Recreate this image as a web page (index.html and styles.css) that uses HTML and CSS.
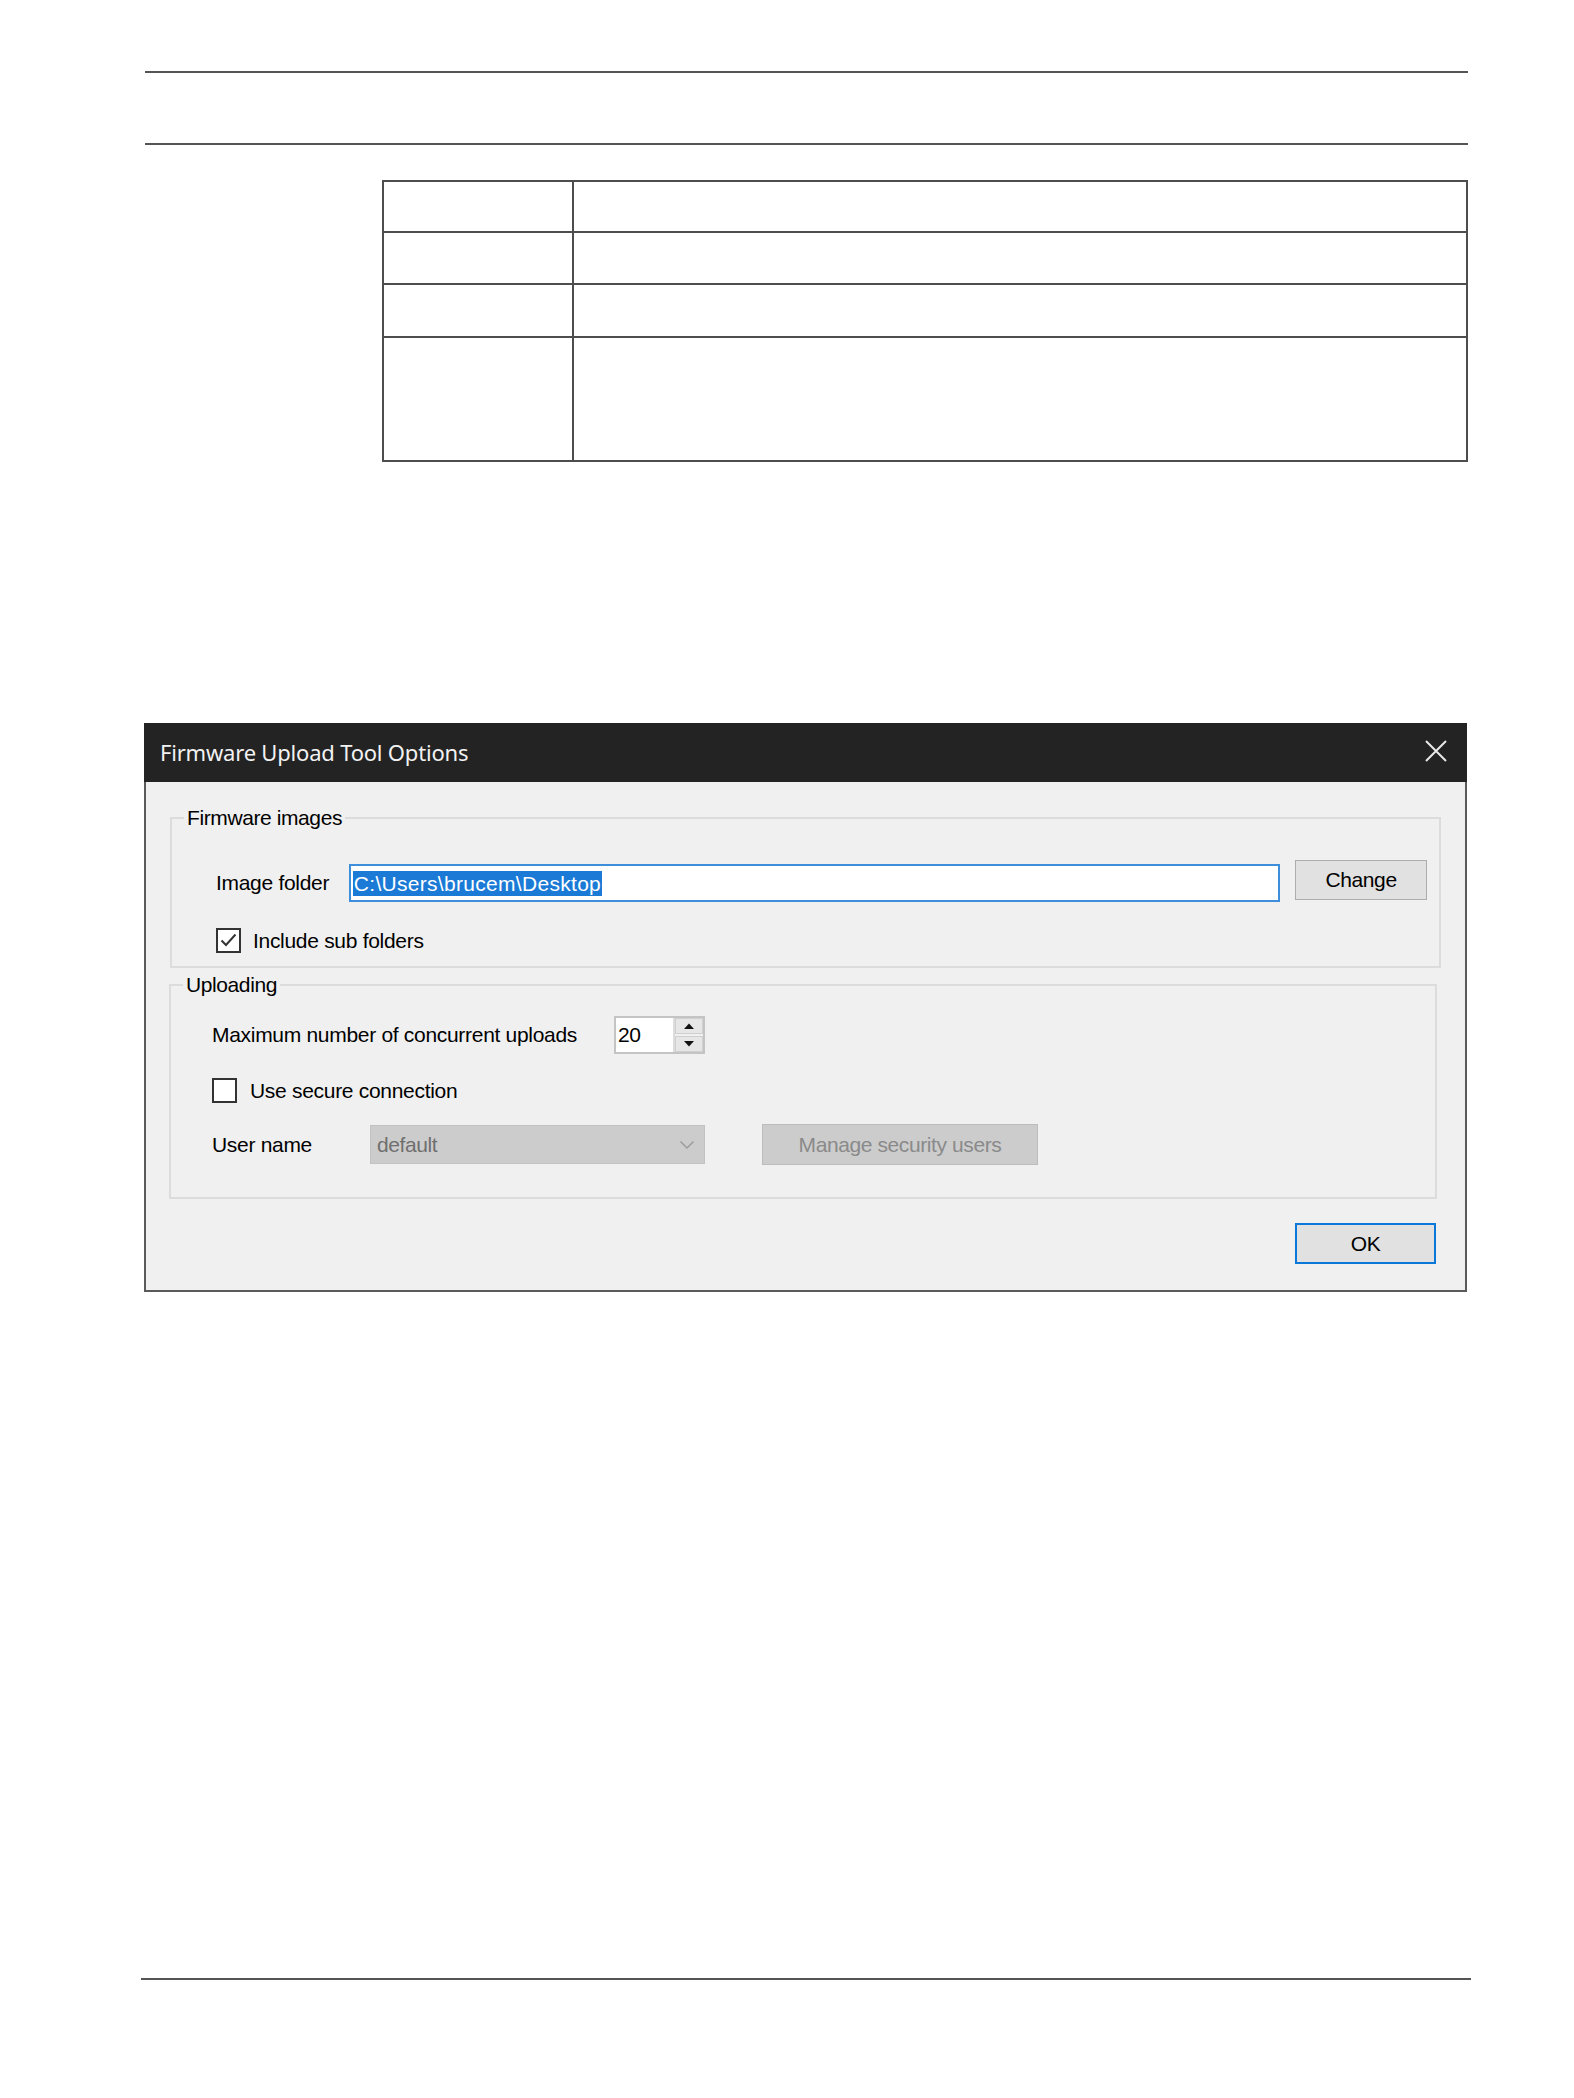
FILE: index.html
```html
<!DOCTYPE html>
<html lang="en">
<head>
<meta charset="utf-8">
<title>Firmware Upload Tool Options</title>
<link rel="stylesheet" href="styles.css">
</head>
<body>
<div class="page">
  <div class="rule"></div>
  <div class="rule rule-second"></div>

  <table class="grid-table">
    <tr class="r1"><td class="c1"></td><td class="c2"></td></tr>
    <tr class="r2"><td class="c1"></td><td class="c2"></td></tr>
    <tr class="r3"><td class="c1"></td><td class="c2"></td></tr>
    <tr class="r4"><td class="c1"></td><td class="c2"></td></tr>
  </table>

  <div class="dialog">
    <div class="titlebar">
      <span class="title">Firmware Upload Tool Options</span>
      <svg class="close" width="22" height="22" viewBox="0 0 22 22">
        <path d="M1 1 L21 21 M21 1 L1 21" stroke="#e8e8e8" stroke-width="2" fill="none"/>
      </svg>
    </div>
    <div class="body">
      <fieldset class="group group-images">
        <legend>Firmware images</legend>
        <div class="row row-folder">
          <span class="lbl lbl-folder">Image folder</span>
          <div class="textbox"><span class="sel">C:\Users\brucem\Desktop</span></div>
          <div class="btn btn-change">Change</div>
        </div>
        <div class="row row-check1">
          <span class="check checked">
            <svg width="21" height="21" viewBox="0 0 21 21"><path d="M3.5 10.5 L8 15 L17.5 4.5" stroke="#333" stroke-width="2" fill="none"/></svg>
          </span>
          <span class="lbl">Include sub folders</span>
        </div>
      </fieldset>

      <fieldset class="group group-upload">
        <legend>Uploading</legend>
        <div class="row row-max">
          <span class="lbl lbl-max">Maximum number of concurrent uploads</span>
          <div class="spin">
            <span class="spin-val">20</span>
            <div class="spin-btns">
              <div class="spin-btn"><svg width="12" height="8" viewBox="0 0 12 8"><path d="M1 7 L6 1.5 L11 7 Z" fill="#111"/></svg></div>
              <div class="spin-btn"><svg width="12" height="8" viewBox="0 0 12 8"><path d="M1 1 L6 6.5 L11 1 Z" fill="#111"/></svg></div>
            </div>
          </div>
        </div>
        <div class="row row-check2">
          <span class="check"></span>
          <span class="lbl">Use secure connection</span>
        </div>
        <div class="row row-user">
          <span class="lbl lbl-user">User name</span>
          <div class="combo">
            <span class="combo-val">default</span>
            <svg class="chev" width="16" height="10" viewBox="0 0 16 10"><path d="M1.5 1.5 L8 8 L14.5 1.5" stroke="#9c9c9c" stroke-width="1.5" fill="none"/></svg>
          </div>
          <div class="btn btn-manage">Manage security users</div>
        </div>
      </fieldset>

      <div class="footer">
        <div class="btn btn-ok">OK</div>
      </div>
    </div>
  </div>

  <div class="rule rule-bottom"></div>
</div>
</body>
</html>
```

FILE: styles.css
```css
html, body {
  margin: 0;
  padding: 0;
  background: #ffffff;
}

.page {
  padding-top: 71px;
  min-height: 2098px;
  box-sizing: border-box;
  font-family: "Liberation Sans", Arial, sans-serif;
}

.rule {
  margin-left: 145px;
  width: 1323px;
  height: 2px;
  background: #555555;
}

.rule-second {
  margin-top: 70px;
}

.rule-bottom {
  margin-top: 686px;
  margin-left: 141px;
  width: 1330px;
}

.grid-table {
  margin-top: 35px;
  margin-left: 382px;
  width: 1086px;
  border-collapse: collapse;
  border: 2px solid #4d4d4d;
}

.grid-table td {
  border: 2px solid #4d4d4d;
  padding: 0;
}

.grid-table .c1 { width: 188px; }
.grid-table .r1 td { height: 49px; }
.grid-table .r2 td { height: 50px; }
.grid-table .r3 td { height: 51px; }
.grid-table .r4 td { height: 122px; }

/* Dialog */
.dialog {
  margin-top: 261px;
  margin-left: 144px;
  width: 1323px;
  height: 569px;
  box-sizing: border-box;
  border: 2px solid #5a5a5a;
  border-top: none;
  background: #f0f0f0;
  display: flex;
  flex-direction: column;
}

.titlebar {
  height: 59px;
  margin: 0 -2px;
  background: #232323;
  display: flex;
  align-items: center;
  justify-content: space-between;
  padding: 0 20px 0 16px;
  flex-shrink: 0;
}

.title {
  font-family: "Noto Sans", "Open Sans", sans-serif;
  font-size: 22px;
  letter-spacing: -0.2px;
  color: #f2f2f2;
  position: relative;
  top: -1px;
}

.close {
  display: block;
  position: relative;
  top: -2px;
}

.body {
  flex: 1;
  padding: 24px 0 0 0;
  display: flex;
  flex-direction: column;
}

.group {
  margin: 0;
  border: 2px solid #dcdcdc;
  padding: 0 12px;
  min-width: 0;
}

.group legend {
  padding: 0 3px;
  font-size: 21px;
  line-height: 24px;
  letter-spacing: -0.4px;
  color: #000;
}

.group-images {
  margin-left: 24px;
  margin-right: 24px;
  padding-bottom: 13px;
}

.group-upload {
  margin-top: 5px;
  margin-left: 23px;
  margin-right: 28px;
  padding-bottom: 32px;
}

.row {
  display: flex;
  align-items: center;
}

.lbl {
  font-size: 21px;
  letter-spacing: -0.3px;
  color: #000;
  white-space: nowrap;
}

.row-folder {
  margin-top: 30px;
  margin-left: 32px;
  height: 42px;
}

.lbl-folder {
  width: 133px;
  position: relative;
  top: 2px;
}

.textbox {
  width: 933px;
  height: 38px;
  box-sizing: border-box;
  border: 2px solid #3d8fdc;
  background: #ffffff;
  display: flex;
  align-items: center;
  padding-left: 2px;
  margin-top: 4px;
}

.sel {
  background: #1a7ad6;
  color: #ffffff;
  font-size: 21px;
  letter-spacing: 0.3px;
  line-height: 25px;
  padding: 0 1px;
}

.btn {
  box-sizing: border-box;
  display: flex;
  align-items: center;
  justify-content: center;
  font-size: 21px;
  letter-spacing: -0.4px;
  background: #e1e1e1;
  border: 1px solid #adadad;
  color: #000;
}

.btn-change {
  margin-left: 15px;
  width: 132px;
  height: 40px;
  margin-bottom: 2px;
}

.check {
  width: 25px;
  height: 25px;
  box-sizing: border-box;
  border: 2px solid #333333;
  background: #ffffff;
  display: flex;
  align-items: center;
  justify-content: center;
  flex-shrink: 0;
}

.check svg { display: block; }

.row-check1 {
  margin-top: 26px;
  margin-left: 32px;
  height: 25px;
  gap: 12px;
}

.row-max {
  margin-top: 19px;
  margin-left: 29px;
  height: 38px;
}

.lbl-max {
  width: 402px;
}

.spin {
  width: 91px;
  height: 38px;
  box-sizing: border-box;
  border: 2px solid #c4c4c4;
  background: #ffffff;
  display: flex;
}

.spin-val {
  flex: 1;
  font-size: 21px;
  letter-spacing: -0.4px;
  line-height: 34px;
  padding-left: 2px;
}

.spin-btns {
  width: 28px;
  display: flex;
  flex-direction: column;
  gap: 2px;
  background: #f0f0f0;
  border-left: 2px solid #dcdcdc;
}

.spin-btn {
  flex: 1;
  background: #e6e6e6;
  border: 1px solid #cfcfcf;
  display: flex;
  align-items: center;
  justify-content: center;
}

.spin-btn svg { display: block; }

.row-check2 {
  margin-top: 24px;
  margin-left: 29px;
  height: 25px;
  gap: 13px;
}

.row-user {
  margin-top: 21px;
  margin-left: 29px;
  height: 41px;
}

.lbl-user {
  width: 158px;
}

.combo {
  width: 335px;
  height: 39px;
  box-sizing: border-box;
  background: #cccccc;
  border: 1px solid #c2c2c2;
  display: flex;
  align-items: center;
  justify-content: space-between;
  padding: 0 9px 0 6px;
}

.combo-val {
  font-size: 21px;
  letter-spacing: -0.4px;
  color: #6f6f6f;
}

.chev { display: block; }

.btn-manage {
  margin-left: 57px;
  width: 276px;
  height: 41px;
  background: #cccccc;
  border: 1px solid #bcbcbc;
  color: #8a8a8a;
}

.footer {
  display: flex;
  justify-content: flex-end;
  padding-right: 29px;
  margin-top: 24px;
}

.btn-ok {
  width: 141px;
  height: 41px;
  border: 2px solid #0a78d8;
}
```
